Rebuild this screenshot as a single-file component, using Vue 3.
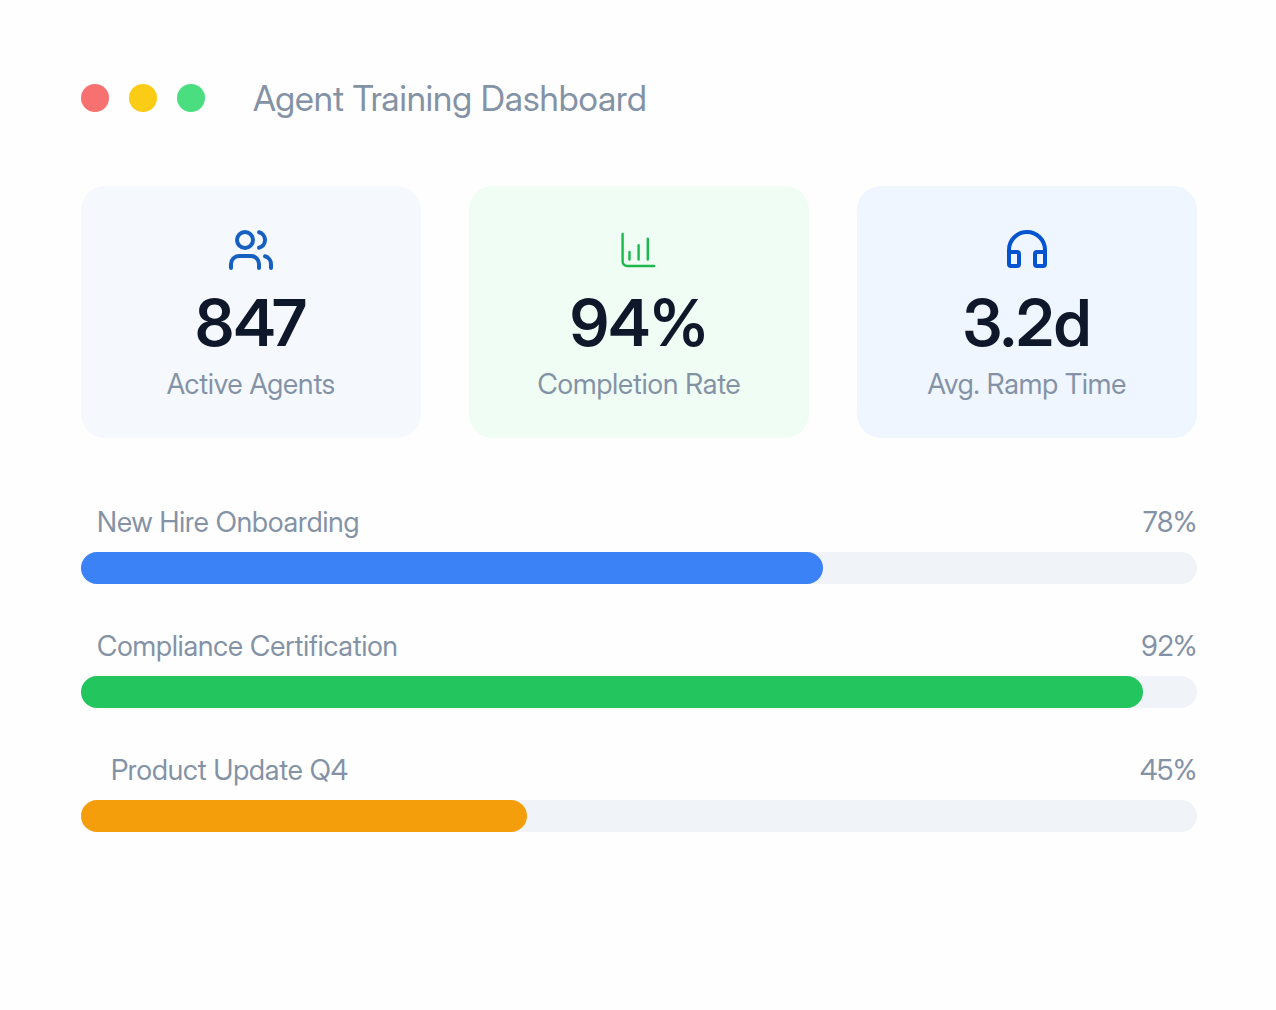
<script setup>
const stats = [
  { icon: 'users', value: '847', label: 'Active Agents' },
  { icon: 'chart', value: '94%', label: 'Completion Rate' },
  { icon: 'headphones', value: '3.2d', label: 'Avg. Ramp Time' },
]

const courses = [
  { name: 'New Hire Onboarding', percent: 78, fill: 66.5, tone: 'blue' },
  { name: 'Compliance Certification', percent: 92, fill: 95.2, tone: 'green' },
  { name: 'Product Update Q4', percent: 45, fill: 40, tone: 'amber', nested: true },
]
</script>

<template>
  <main class="dashboard">
    <header class="header">
      <div class="dots" aria-hidden="true">
        <span class="dot red"></span>
        <span class="dot yellow"></span>
        <span class="dot green"></span>
      </div>
      <h1 class="title">Agent Training Dashboard</h1>
    </header>

    <section class="stats">
      <article v-for="stat in stats" :key="stat.label" class="card" :class="stat.icon">
        <svg v-if="stat.icon === 'users'" class="icon" viewBox="0 0 24 24" stroke-width="2" aria-hidden="true">
          <circle cx="9" cy="7" r="4" />
          <path d="M16 21v-2a4 4 0 0 0-4-4H6a4 4 0 0 0-4 4v2" />
          <path d="M16 3.13a4 4 0 0 1 0 7.75" />
          <path d="M22 21v-2a4 4 0 0 0-3-3.87" />
        </svg>
        <svg v-else-if="stat.icon === 'chart'" class="icon" viewBox="0 0 48 48" stroke-width="2.4" aria-hidden="true">
          <path d="M7.6 8v27.5a4.5 4.5 0 0 0 4.5 4.5h27" />
          <path d="M14.5 26v7.5M23.6 19.3v14.2M32.8 12.7v20.8" />
        </svg>
        <svg v-else class="icon" viewBox="0 0 24 24" stroke-width="2" aria-hidden="true">
          <path d="M3 13v-1a9 9 0 0 1 18 0v1" />
          <path d="M3 13h4a1 1 0 0 1 1 1v5a1 1 0 0 1-1 1H4a1 1 0 0 1-1-1z" />
          <path d="M21 13h-4a1 1 0 0 0-1 1v5a1 1 0 0 0 1 1h3a1 1 0 0 0 1-1z" />
        </svg>
        <strong class="value">{{ stat.value }}</strong>
        <span class="label">{{ stat.label }}</span>
      </article>
    </section>

    <section class="courses">
      <div v-for="course in courses" :key="course.name" class="course">
        <div class="course-head" :class="{ nested: course.nested }">
          <span>{{ course.name }}</span>
          <span>{{ course.percent }}%</span>
        </div>
        <div
          class="track"
          role="progressbar"
          :aria-label="course.name"
          :aria-valuenow="course.percent"
          aria-valuemin="0"
          aria-valuemax="100"
        >
          <div class="fill" :class="course.tone" :style="{ width: course.fill + '%' }"></div>
        </div>
      </div>
    </section>
  </main>
</template>

<style>
body {
  margin: 0;
  background: #fefefe;
}
</style>

<style scoped>
.dashboard {
  display: flex;
  flex-direction: column;
  gap: 70px;
  padding: 80px 79px 80px 81px;
  font-family: "Inter Display", Inter, "Liberation Sans", sans-serif;
  font-size: 28px;
  line-height: 28px;
  color: #8492a6;
}
.header {
  display: flex;
  align-items: center;
  gap: 48px;
}
.dots {
  display: flex;
  gap: 20px;
}
.dot {
  width: 28px;
  height: 28px;
  border-radius: 50%;
}
.dot.red { background: #f87171; }
.dot.yellow { background: #facc15; }
.dot.green { background: #4ade80; }
.title {
  margin: 0;
  font-size: 35px;
  line-height: 36px;
  font-weight: 400;
}
.stats {
  display: grid;
  grid-template-columns: repeat(3, 1fr);
  gap: 48px;
}
.card {
  display: flex;
  flex-direction: column;
  align-items: center;
  gap: 16px;
  padding: 40px 16px 42px;
  border-radius: 24px;
}
.card.users { background: #f5f9fe; color: #1660c0; }
.card.chart { background: #f0fdf5; color: #1cb84e; }
.card.headphones { background: #eff6ff; color: #0453d0; }
.icon {
  width: 48px;
  height: 48px;
  fill: none;
  stroke: currentColor;
  stroke-linecap: round;
  stroke-linejoin: round;
}
.value {
  font-size: 64px;
  line-height: 66px;
  font-weight: 600;
  color: #0f172a;
}
.label {
  line-height: 24px;
  color: #8492a6;
}
.courses {
  display: flex;
  flex-direction: column;
  gap: 48px;
}
.course {
  display: flex;
  flex-direction: column;
  gap: 16px;
}
.course-head {
  display: flex;
  justify-content: space-between;
  padding-left: 16px;
}
.course-head.nested {
  padding-left: 30px;
}
.track {
  height: 32px;
  border-radius: 16px;
  background: #f0f4f9;
}
.fill {
  height: 100%;
  border-radius: 16px;
}
.fill.blue { background: #3b82f6; }
.fill.green { background: #22c55e; }
.fill.amber { background: #f59e0b; }
</style>
